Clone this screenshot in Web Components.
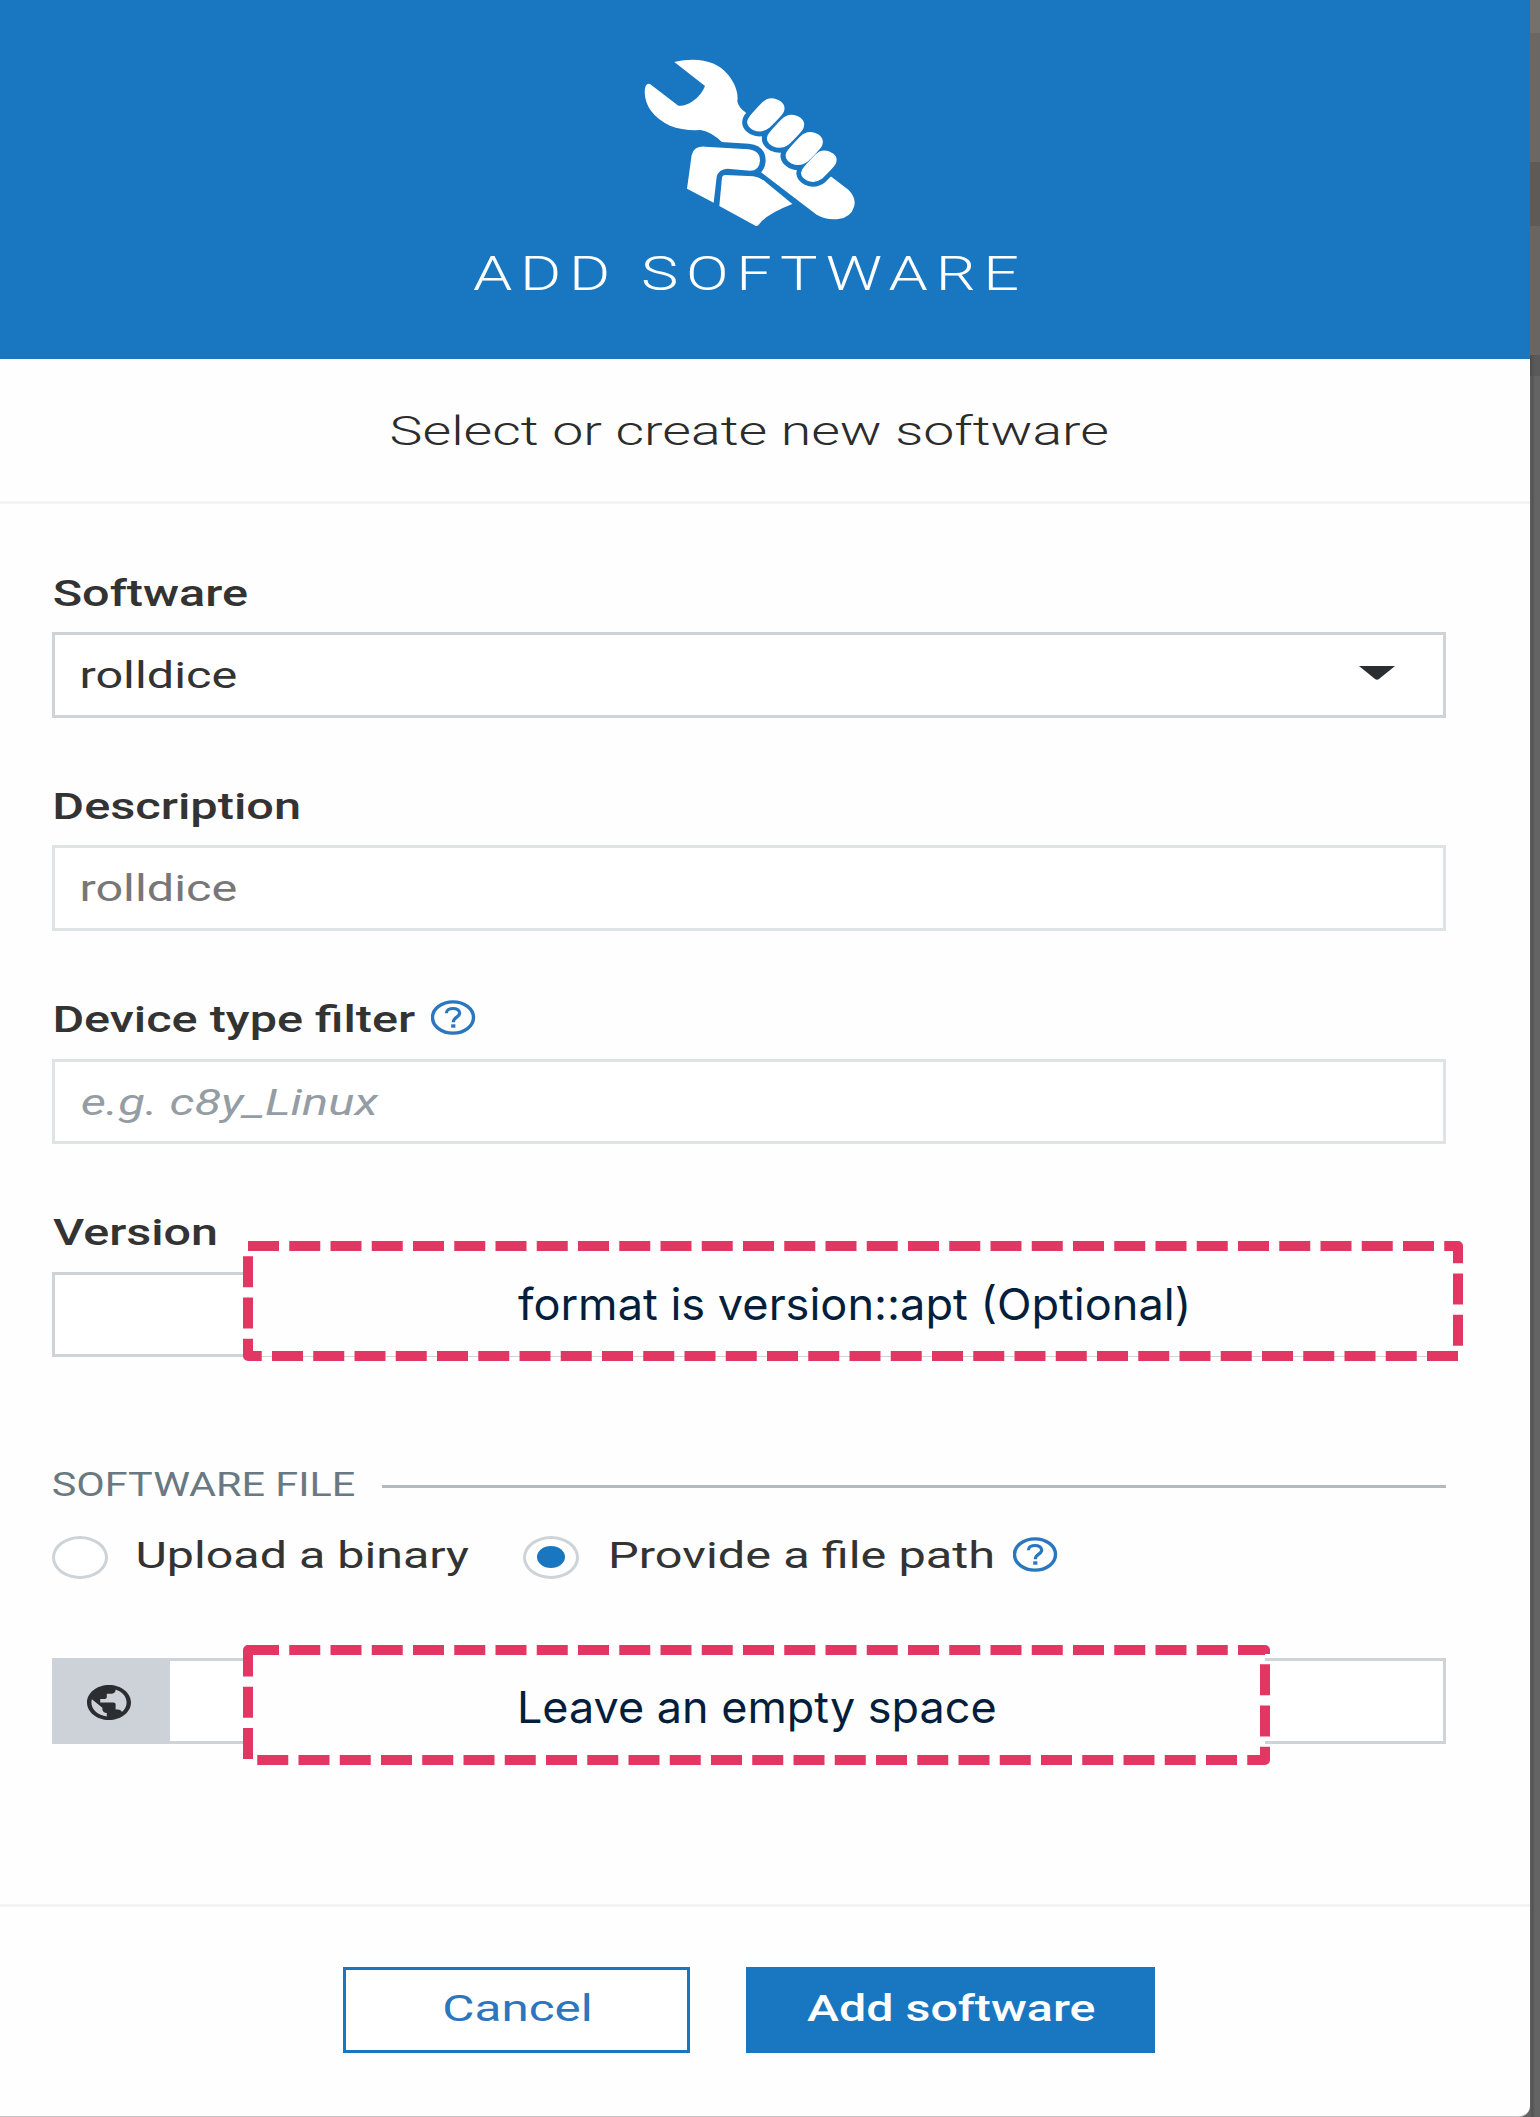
<!DOCTYPE html>
<html lang="en">
<head>
<meta charset="utf-8">
<title>Add software</title>
<style>
  html, body { margin: 0; padding: 0; }
  body { width: 1540px; height: 2117px; overflow: hidden; font-family: Roboto, "Liberation Sans", sans-serif; color: #333; }
</style>
</head>
<body>
<add-software-dialog></add-software-dialog>
<script>
const define = (name, html, setup) => {
  const tpl = document.createElement('template');
  tpl.innerHTML = html;
  customElements.define(name, class extends HTMLElement {
    connectedCallback() {
      if (this.shadowRoot) return;
      const root = this.attachShadow({ mode: 'open' });
      root.appendChild(tpl.content.cloneNode(true));
      if (setup) setup(this, root);
    }
  });
};

/* Text whose ink is stretched to an exact width: w = width, size = font size, lh = line height. */
define('wide-text', `
  <style>
    :host { display: block; flex: none; }
    span { display: inline-block; white-space: pre; transform-origin: 0 50%; }
  </style><span><slot></slot></span>`, (el, root) => {
  const w = +el.getAttribute('w'), size = +el.getAttribute('size');
  el.style.cssText += `width:${w}px;font-size:${size}px;line-height:${el.getAttribute('lh')}px;height:${el.getAttribute('lh')}px`;
  const cs = getComputedStyle(el), ctx = document.createElement('canvas').getContext('2d');
  ctx.font = `${cs.fontStyle} ${cs.fontWeight} ${size}px ${cs.fontFamily}`;
  if (cs.letterSpacing !== 'normal') ctx.letterSpacing = cs.letterSpacing;
  const text = el.textContent.trim(), m = ctx.measureText(text);
  const ls = parseFloat(cs.letterSpacing) || 0;
  const right = Math.min(m.actualBoundingBoxRight, m.width - ls);
  const k = w / (right + m.actualBoundingBoxLeft);
  root.querySelector('span').style.transform = `translateX(${m.actualBoundingBoxLeft * k}px) scaleX(${k})`;
});

define('wrench-icon', `
  <style>:host { display: block; width: 260px; height: 200px; } svg { display: block; }</style>
  <svg width="260" height="200" viewBox="0 0 780 600" fill="#fff">
    <path d="M163 66C235 50 292 64 325 105C350 137 355 165 352 185Q358 205 378 218L640 415L686 450Q710 475 702 500Q693 532 655 537Q620 541 590 524L425 398L310 310Q275 275 242 270Q190 273 150 257Q75 220 74 155Q75 128 90 132L175 197Q195 200 218 184Q245 165 255 138Z"/>
    <defs>
      <path id="f" d="M427 190Q446 171 470 180Q499 192 489 216Q484 226 447 262Q425 279 400 268Q377 255 386 237Q392 226 427 190Z"/>
      <path id="t" d="M215 345Q222 318 255 320L385 328Q420 332 420 362Q418 392 390 392L322 386Q296 388 290 410L281 488L201 446Z"/>
    </defs>
    <g fill="#1976c1" stroke="#1976c1" stroke-width="34" stroke-linejoin="round">
      <use href="#f"/><use href="#f" x="59" y="49"/><use href="#f" x="115" y="101"/><use href="#f" transform="translate(181 165) scale(.95)"/>
      <use href="#t"/>
    </g>
    <g stroke="#fff" stroke-width="4"><use href="#f"/><use href="#f" x="59" y="49"/><use href="#f" x="115" y="101"/><use href="#f" transform="translate(181 165) scale(.95)"/></g>
    <use href="#t"/>
    <path d="M316 405L400 409Q420 412 436 425L517 492Q440 522 418 552Q412 562 402 555L298 498L306 412Q308 405 316 405Z"/>
  </svg>`);

define('help-icon', `
  <style>:host { display: block; flex: none; width: 45px; height: 35px; } svg { display: block; }</style>
  <svg width="45" height="35" viewBox="0 0 45 35" fill="none" stroke="#2a76bf">
    <ellipse cx="22" cy="17.500" rx="20.500" ry="15.600" stroke-width="3.400"/>
    <path d="M15.300 13.200C15.500 7 28.700 7 28.700 13C28.700 17.400 22.300 16.800 22.300 22.200" stroke-width="3.200"/>
    <path d="M20.200 26H24.400" stroke-width="3.400"/>
  </svg>`);

define('globe-icon', `
  <style>:host { display: block; width: 44px; height: 35px; margin-top: 2px; } svg { display: block; }</style>
  <svg width="44" height="35" viewBox="2 2 20 20" preserveAspectRatio="none">
    <path fill="#2b2e31" d="M12 2C6.480 2 2 6.480 2 12s4.480 10 10 10 10-4.480 10-10S17.520 2 12 2zM11 19.930C7.050 19.440 4 16.080 4 12c0-.62.08-1.210.21-1.790L9 15v1c0 1.100.9 2 2 2v1.930zM17.900 17.390C17.640 16.580 16.900 16 16 16h-1v-3c0-.55-.45-1-1-1H8v-2h2c.55 0 1-.45 1-1V7h2c1.100 0 2-.9 2-2v-.41c2.930 1.190 5 4.060 5 7.410 0 2.080-.8 3.970-2.100 5.390z"/>
  </svg>`);

define('form-field', `
  <style>
    :host { display: flex; flex-direction: column; height: 213.3px; }
    .label { display: flex; align-items: flex-start; gap: 16px; height: 66px; padding: 1.500px 0 0 2px; font-weight: 500; box-sizing: border-box; }
    .box { display: flex; align-items: center; justify-content: space-between; height: 85.5px; box-sizing: border-box; padding: 0 48px 0 27px; border: 3px solid var(--line, #cdd3d6); background: #fff; }
  </style>
  <div class="label"><slot name="label"></slot></div>
  <div class="box"><slot></slot></div>`);

define('select-caret', `
  <style>:host { display: block; width: 36px; height: 14px; margin-top: -3px; } svg { display: block; }</style>
  <svg width="36" height="14"><path fill="#2b2e31" d="M0 0H36L20 13Q18 14.500 16 13Z"/></svg>`);

define('radio-dot', `
  <style>
    :host { display: flex; flex: none; align-items: center; justify-content: center; box-sizing: border-box; width: 56px; height: 43px; border: 3px solid #ced3d7; border-radius: 50%; background: #fff; }
    i { display: none; width: 28px; height: 22px; border-radius: 50%; background: #1976c1; }
    :host([checked]) i { display: block; }
  </style><i></i>`);

/* Dashed callout laid over the form. */
define('dashed-note', `
  <style>
    :host { display: block; position: absolute; height: 120px; color: #041e3c; font-family: Inter, "Liberation Sans", sans-serif; }
    svg { display: block; position: absolute; inset: 0; }
    .text { position: relative; display: flex; align-items: center; height: 120px; padding-left: 275px; }
  </style>
  <svg height="120"><rect x="5" y="5" height="110" fill="#fefefe" stroke="#e33763" stroke-width="10" stroke-dasharray="31 10.250" stroke-linejoin="round"/></svg>
  <div class="text"><slot></slot></div>`, (el, root) => {
  const w = +el.getAttribute('width');
  el.style.width = w + 'px';
  root.querySelector('svg').setAttribute('width', w);
  root.querySelector('rect').setAttribute('width', w - 10);
});

define('dialog-button', `
  <style>
    :host { display: flex; align-items: center; justify-content: center; box-sizing: border-box; height: 86px; border: 3px solid #1976c1; color: #2c76bd; background: #fff; }
    :host([primary]) { background: #1976c1; color: #fff; font-weight: 500; }
  </style><slot></slot>`);

define('page-backdrop', `
  <style>
    :host { display: flex; flex-direction: column; width: 10px; height: 2117px; }
    div { flex: none; }
    .a { height: 33px; background: #74706c; } .b { height: 129px; background: #6b6764; }
    .c { height: 64px; background: #5d5a58; } .d { height: 129px; background: #686563; }
    .e { height: 21px; background: linear-gradient(90deg, #4c4c4c, #5a5a5a 50%); }
    .f { flex: 1; background: linear-gradient(90deg, #606060, #545454 25%, #646464 50%); }
  </style>
  <div class="a"></div><div class="b"></div><div class="c"></div><div class="d"></div><div class="e"></div><div class="f"></div>`);

define('add-software-dialog', `
  <style>
    :host { display: flex; width: 1540px; height: 2117px; background: #646464; }
    .modal { position: relative; display: flex; flex-direction: column; width: 1530px; height: 2117px; box-sizing: border-box; background: #fefefe; border-bottom: 1px solid #c6c6c6; border-bottom-right-radius: 11px; overflow: hidden; }
    header { display: flex; flex-direction: column; align-items: center; height: 359px; box-sizing: border-box; padding: 40px 31px 0 0; background: #1976c1; color: #fff; }
    header wide-text { margin: 4px 8px 0 0; font-weight: 350; letter-spacing: 6px; }
    .sub { display: flex; justify-content: center; align-items: flex-start; height: 145px; box-sizing: border-box; padding: 43px 31px 0 0; border-bottom: 3px solid #f3f3f3; font-weight: 300; color: #2c2c2c; }
    main { display: flex; flex-direction: column; height: 1399.500px; box-sizing: border-box; padding: 62px 84px 0 52px; }
    .muted { color: #777; }
    .hint { font-style: italic; color: #949da3; margin: 3px 0 0; }
    .legend { display: flex; align-items: center; justify-content: space-between; height: 44px; margin-top: 43px; color: #697981; }
    .legend wide-text { margin: 2px 0 0 1px; }
    .legend hr { width: 1064px; height: 3px; margin: 4px 0 0; border: 0; background: #b2babf; }
    .radios { display: flex; align-items: center; height: 50px; margin-top: 26px; }
    .radios wide-text { margin: 0 0 4px 30px; }
    .radios radio-dot + wide-text ~ radio-dot { margin-left: 54px; }
    .radios radio-dot ~ radio-dot + wide-text { margin-left: 33px; }
    .radios help-icon { margin: 0 0 6px 20px; }
    .group { display: flex; height: 86px; margin-top: 76px; }
    .addon { display: flex; align-items: center; width: 118px; box-sizing: border-box; padding-left: 35px; background: #ccd2d7; }
    .path { flex: 1; border: 3px solid #cdd3d6; border-left: 0; background: #fff; }
    footer { display: flex; justify-content: center; gap: 56px; flex: 1; box-sizing: border-box; padding: 60px 32px 0 0; border-top: 3px solid #f3f3f3; }
  </style>
  <div class="modal">
    <header><wrench-icon></wrench-icon><wide-text w="545" size="49" lh="60">ADD SOFTWARE</wide-text></header>
    <div class="sub"><wide-text w="717" size="40" lh="60">Select or create new software</wide-text></div>
    <main>
      <form-field>
        <wide-text slot="label" w="193" size="37" lh="52">Software</wide-text>
        <wide-text w="154" size="37.500" lh="52">rolldice</wide-text><select-caret></select-caret>
      </form-field>
      <form-field style="--line:#dee3e4">
        <wide-text slot="label" w="244" size="37" lh="52" style="margin-left:1px">Description</wide-text>
        <wide-text class="muted" w="154" size="37.500" lh="52">rolldice</wide-text>
      </form-field>
      <form-field style="--line:#dee3e4">
        <wide-text slot="label" w="360" size="37" lh="52" style="margin-left:1px">Device type filter</wide-text><help-icon slot="label" style="margin-top:6px"></help-icon>
        <wide-text class="hint" w="296" size="37" lh="52">e.g. c8y_Linux</wide-text>
      </form-field>
      <form-field><wide-text slot="label" w="163" size="37" lh="52" style="margin-left:-1px">Version</wide-text></form-field>
      <div class="legend"><wide-text w="301" size="33.500" lh="44">SOFTWARE FILE</wide-text><hr></div>
      <div class="radios">
        <radio-dot></radio-dot><wide-text w="331" size="37.500" lh="50">Upload a binary</wide-text>
        <radio-dot checked></radio-dot><wide-text w="381" size="37.500" lh="50">Provide a file path</wide-text>
        <help-icon></help-icon>
      </div>
      <div class="group"><div class="addon"><globe-icon></globe-icon></div><div class="path"></div></div>
    </main>
    <footer>
      <dialog-button style="width:347px"><wide-text w="145" size="37.500" lh="60" style="margin:-3px 0 0 2px">Cancel</wide-text></dialog-button>
      <dialog-button primary style="width:409px"><wide-text w="287" size="37.500" lh="60" style="margin-top:-3px">Add software</wide-text></dialog-button>
    </footer>
    <dashed-note width="1220" style="left:243px;top:1241px"><wide-text w="669" size="44" lh="60" style="margin-top:6px">format is version::apt (Optional)</wide-text></dashed-note>
    <dashed-note width="1027" style="left:243px;top:1645px"><wide-text w="475" size="44" lh="60" style="margin:3px 0 0 1.500px">Leave an empty space</wide-text></dashed-note>
  </div>
  <page-backdrop></page-backdrop>`);
</script>
</body>
</html>
